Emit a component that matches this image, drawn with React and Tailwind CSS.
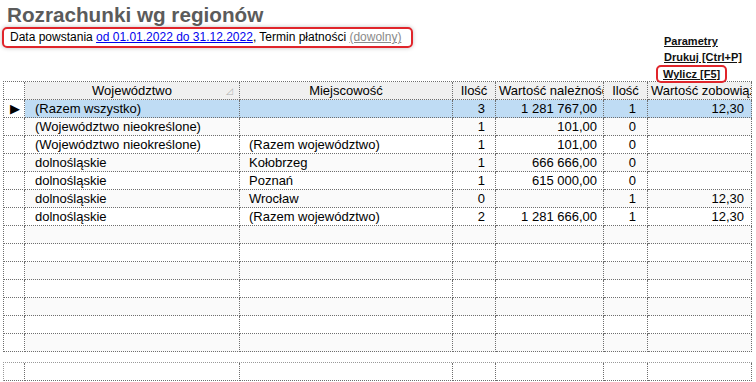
import React from 'react';

const rows = [
  { woj: '(Razem wszystko)', miej: '', il1: '3', nal: '1 281 767,00', il2: '1', zob: '12,30', selected: true },
  { woj: '(Województwo nieokreślone)', miej: '', il1: '1', nal: '101,00', il2: '0', zob: '' },
  { woj: '(Województwo nieokreślone)', miej: '(Razem województwo)', il1: '1', nal: '101,00', il2: '0', zob: '' },
  { woj: 'dolnośląskie', miej: 'Kołobrzeg', il1: '1', nal: '666 666,00', il2: '0', zob: '' },
  { woj: 'dolnośląskie', miej: 'Poznań', il1: '1', nal: '615 000,00', il2: '0', zob: '' },
  { woj: 'dolnośląskie', miej: 'Wrocław', il1: '0', nal: '', il2: '1', zob: '12,30' },
  { woj: 'dolnośląskie', miej: '(Razem województwo)', il1: '2', nal: '1 281 666,00', il2: '1', zob: '12,30' },
];

const emptyRows = 7;

const cell = 'border-r border-b border-dotted border-[#6e6e6e] h-[18px] p-0 overflow-hidden whitespace-nowrap leading-[17px]';

const Cols = () => (
  <colgroup>
    <col className="w-[21px]" />
    <col className="w-[215px]" />
    <col className="w-[213px]" />
    <col className="w-[43px]" />
    <col className="w-[108px]" />
    <col className="w-[44px]" />
    <col className="w-[104px]" />
  </colgroup>
);

const Row = ({ r, i }) => {
  const bg = r && r.selected ? 'bg-[#bfdcf4]' : i % 2 === 1 ? 'bg-[#fafafa]' : 'bg-white';
  return (
    <tr className={bg}>
      <td className={`${cell} bg-white`}>
        {r && r.selected && <span className="block pl-[6px] text-[13px] leading-[17px] text-black">▶</span>}
      </td>
      <td className={`${cell} pl-[10px]`}>{r && r.woj}</td>
      <td className={`${cell} pl-[9px]`}>{r && r.miej}</td>
      <td className={`${cell} text-right pr-[10px]`}>{r && r.il1}</td>
      <td className={`${cell} text-right pr-[6px]`}>{r && r.nal}</td>
      <td className={`${cell} text-right pr-[11px]`}>{r && r.il2}</td>
      <td className={`${cell} text-right pr-[7px]`}>{r && r.zob}</td>
    </tr>
  );
};

const App = () => {
  return (
    <div className="w-[756px] h-[382px] bg-white text-black overflow-hidden relative font-['Liberation_Sans',Arial,sans-serif]">
      <div className="flex justify-between items-start h-[81px]">
        <div>
          <h1 className="pl-[7px] pt-[4px] text-[20.7px] leading-[22px] font-bold text-[#5b5b5b] whitespace-nowrap">Rozrachunki wg regionów</h1>
          <div className="ml-[2px] mt-[1px] w-[411px] h-[21px] border-2 border-[#e0252b] rounded-[5px] shadow-[0_0_4px_rgba(0,0,0,0.25)] pl-[6px] text-[12px] leading-[17px] whitespace-nowrap">
            Data powstania <span className="text-[#0000ee] underline">od 01.01.2022 do 31.12.2022</span>, Termin płatności{' '}
            <span className="text-[#8a8a8a] underline">(dowolny)</span>
          </div>
        </div>
        <div className="relative z-10 pt-[33px] pr-[14px] w-[100px] flex flex-col items-start text-[11px] font-bold leading-[16px] text-[#111]">
          <span className="underline ml-[8px]">Parametry</span>
          <span className="underline ml-[8px]">Drukuj [Ctrl+P]</span>
          <span className="border-2 border-[#e0252b] rounded-[5px] px-[5px] leading-[14px] underline bg-white">Wylicz [F5]</span>
        </div>
      </div>

      <table className="table-fixed border-separate border-spacing-0 ml-[3px] w-[748px] text-[13px] border-l border-t border-dotted border-[#6e6e6e]">
        <Cols />
        <thead>
          <tr className="bg-[#f0f0f0]">
            <th className={`${cell} font-normal bg-white`}></th>
            <th className={`${cell} font-normal relative`}>
              Województwo
              <span className="absolute right-[6px] top-[1px] text-[9px] text-[#b0b0b0]">◿</span>
            </th>
            <th className={`${cell} font-normal`}>Miejscowość</th>
            <th className={`${cell} font-normal`}>Ilość</th>
            <th className={`${cell} font-normal text-left pl-[3px]`}>Wartość należności</th>
            <th className={`${cell} font-normal`}>Ilość</th>
            <th className={`${cell} font-normal text-left pl-[3px]`}>Wartość zobowiązań</th>
          </tr>
        </thead>
        <tbody>
          {rows.map((r, i) => (
            <Row key={i} r={r} i={i} />
          ))}
          {Array.from({ length: emptyRows }).map((_, j) => (
            <Row key={`e${j}`} r={null} i={rows.length + j} />
          ))}
        </tbody>
      </table>

      <table className="table-fixed border-separate border-spacing-0 ml-[3px] mt-[10px] w-[748px] text-[13px] border-l border-t border-dotted border-[#9a9a9a]">
        <Cols />
        <tbody>
          <Row r={null} i={0} />
        </tbody>
      </table>
    </div>
  );
};

export default App;
